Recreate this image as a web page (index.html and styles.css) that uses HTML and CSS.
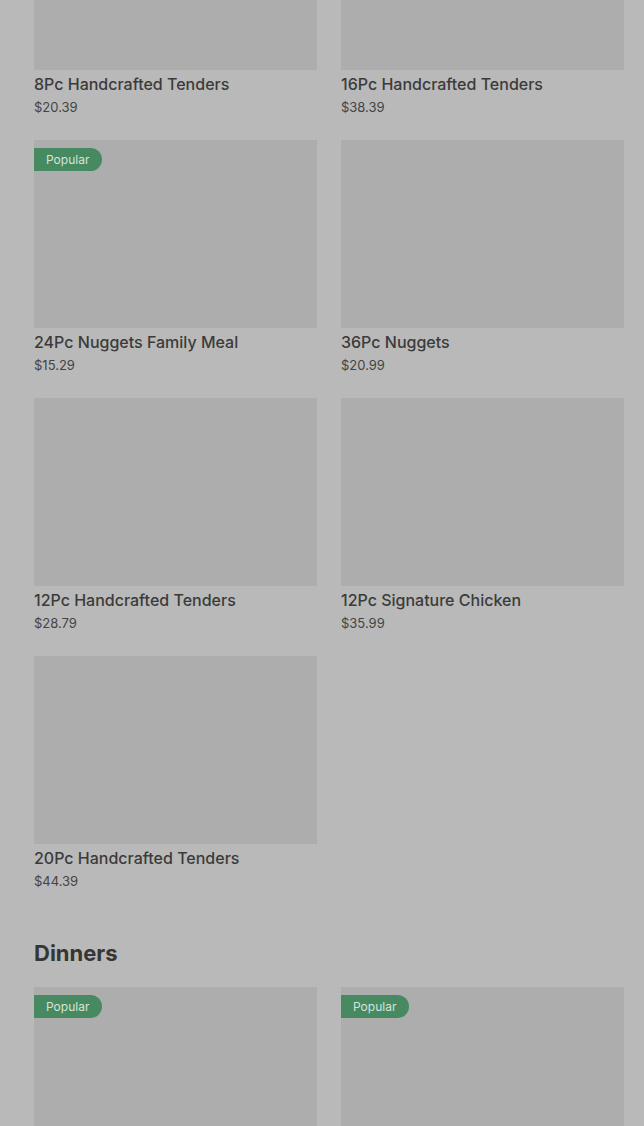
FILE: index.html
```html
<!DOCTYPE html>
<html lang="en">
<head>
  <meta charset="UTF-8">
  <meta name="viewport" content="width=device-width, initial-scale=1.0">
  <title>Menu</title>
  <link rel="stylesheet" href="styles.css">
</head>
<body>
  <main class="menu">
    <section class="menu-section">
      <div class="item-grid">
        <div class="item">
          <div class="item-image"></div>
          <div class="item-name">8Pc Handcrafted Tenders</div>
          <div class="item-price">$20.39</div>
        </div>
        <div class="item">
          <div class="item-image"></div>
          <div class="item-name">16Pc Handcrafted Tenders</div>
          <div class="item-price">$38.39</div>
        </div>
        <div class="item">
          <div class="item-image"><span class="badge">Popular</span></div>
          <div class="item-name">24Pc Nuggets Family Meal</div>
          <div class="item-price">$15.29</div>
        </div>
        <div class="item">
          <div class="item-image"></div>
          <div class="item-name">36Pc Nuggets</div>
          <div class="item-price">$20.99</div>
        </div>
        <div class="item">
          <div class="item-image"></div>
          <div class="item-name">12Pc Handcrafted Tenders</div>
          <div class="item-price">$28.79</div>
        </div>
        <div class="item">
          <div class="item-image"></div>
          <div class="item-name">12Pc Signature Chicken</div>
          <div class="item-price">$35.99</div>
        </div>
        <div class="item">
          <div class="item-image"></div>
          <div class="item-name">20Pc Handcrafted Tenders</div>
          <div class="item-price">$44.39</div>
        </div>
      </div>
    </section>
    <section class="menu-section">
      <h2 class="section-title">Dinners</h2>
      <div class="item-grid">
        <div class="item">
          <div class="item-image"><span class="badge">Popular</span></div>
        </div>
        <div class="item">
          <div class="item-image"><span class="badge">Popular</span></div>
        </div>
      </div>
    </section>
  </main>
</body>
</html>
```

FILE: styles.css
```css
html, body { margin: 0; background: #b9b9b9; }
body { font-family: Inter, "Noto Sans", sans-serif; color: #3b3b3b; overflow: hidden; height: 1126px; }
.menu { margin-top: -118px; padding: 0 20px 0 34px; }
.menu-section + .menu-section { margin-top: 47px; }
.item-grid { display: grid; grid-template-columns: 283px 283px; column-gap: 24px; row-gap: 24px; }
.item-image { position: relative; height: 188px; background: #adadad; }
.badge { position: absolute; top: 8px; left: 0; background: #478a62; color: #d5e4da; font-size: 12px; line-height: 23px; height: 23px; padding: 0 13px 0 12px; border-radius: 0 12px 12px 0; }
.item-name { margin-top: 4px; font-size: 16px; line-height: 20px; font-weight: 500; }
.item-price { margin-top: 4px; font-size: 13px; line-height: 18px; color: #444; }
.section-title { margin: 0 0 18px; font-size: 22px; line-height: 32px; font-weight: 700; color: #363636; }
```
